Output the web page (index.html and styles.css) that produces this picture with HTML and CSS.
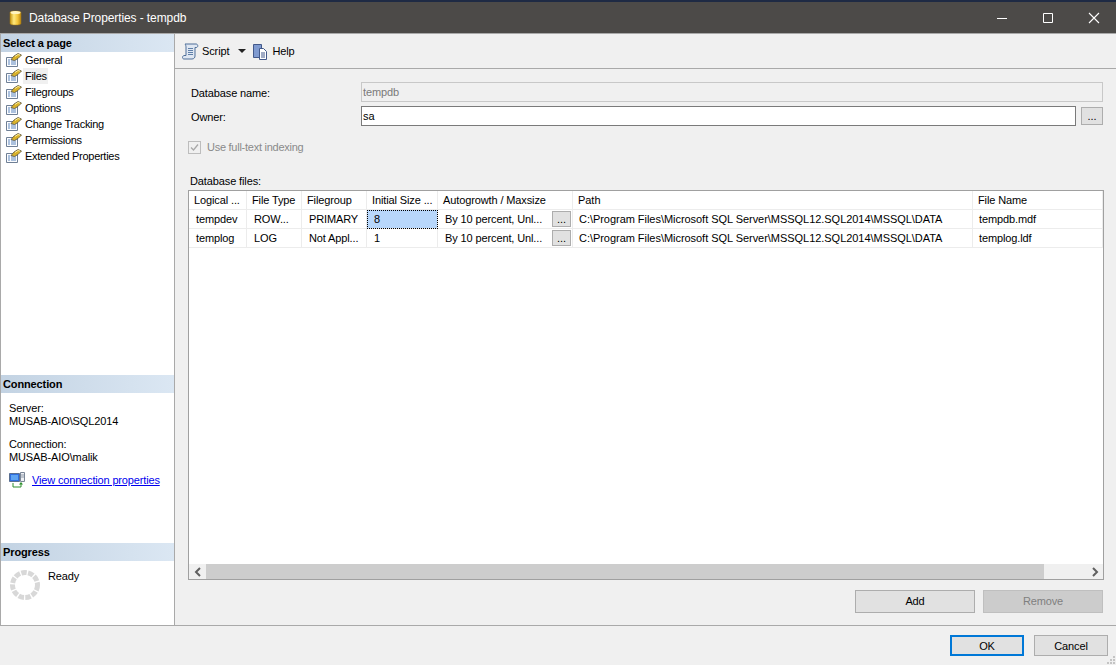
FILE: index.html
```html
<!DOCTYPE html>
<html lang="en">
<head>
<meta charset="utf-8">
<title>Database Properties - tempdb</title>
<link rel="stylesheet" href="styles.css">
</head>
<body>
<svg class="defs" width="0" height="0" aria-hidden="true">
  <defs>
    <linearGradient id="dbg" x1="0" x2="1" y1="0" y2="0">
      <stop offset="0" stop-color="#c4930f"/><stop offset=".35" stop-color="#ffe97e"/><stop offset=".7" stop-color="#f3c53a"/><stop offset="1" stop-color="#b98510"/>
    </linearGradient>
    <symbol id="page" viewBox="0 0 18 16">
      <path d="M1.500 5.500h11v9h-11z" fill="#fbfcfe" stroke="#6f7f95"/>
      <path d="M3 8h2M3 10h2M3 12h2M6 8h5M6 10h5M6 12h5" stroke="#5d86bd"/>
      <path d="M6 7.500L9 4l4-2.500 3.500 1.500L13 6.500 9.500 8.500z" fill="#d9b22a" stroke="#5c5640" stroke-width=".8"/>
      <path d="M10 4.500l3-2 2 .6" stroke="#fff2a6" fill="none" stroke-width=".9"/>
    </symbol>
  </defs>
</svg>
<div class="window">
  <header class="titlebar">
    <svg class="dbicon" width="13" height="16" viewBox="0 0 13 16"><path d="M1 2.500C1 .500 12 .500 12 2.500v11c0 2-11 2-11 0z" fill="url(#dbg)" stroke="#a87d12" stroke-width=".5"/><ellipse cx="6.500" cy="2.500" rx="5" ry="1.500" fill="#fff4c0"/></svg>
    <span class="title">Database Properties - tempdb</span>
    <div class="winbtns">
      <span class="winbtn"><svg width="12" height="12" viewBox="0 0 12 12"><path d="M1 6.500h10" stroke="#fff"/></svg></span>
      <span class="winbtn"><svg width="12" height="12" viewBox="0 0 12 12"><path d="M1.500 1.500h9v9h-9z" fill="none" stroke="#fff"/></svg></span>
      <span class="winbtn"><svg width="12" height="12" viewBox="0 0 12 12"><path d="M1 1l10 10M11 1L1 11" stroke="#fff" stroke-width="1.100"/></svg></span>
    </div>
  </header>
  <div class="main">
    <aside class="sidebar">
      <section class="side-top">
        <h2 class="side-head">Select a page</h2>
        <ul class="pages">
          <li class="page"><svg class="pico"><use href="#page"/></svg><span class="plabel">General</span></li>
          <li class="page"><svg class="pico"><use href="#page"/></svg><span class="plabel sel">Files</span></li>
          <li class="page"><svg class="pico"><use href="#page"/></svg><span class="plabel">Filegroups</span></li>
          <li class="page"><svg class="pico"><use href="#page"/></svg><span class="plabel">Options</span></li>
          <li class="page"><svg class="pico"><use href="#page"/></svg><span class="plabel">Change Tracking</span></li>
          <li class="page"><svg class="pico"><use href="#page"/></svg><span class="plabel">Permissions</span></li>
          <li class="page"><svg class="pico"><use href="#page"/></svg><span class="plabel">Extended Properties</span></li>
        </ul>
      </section>
      <section class="side-conn">
        <h2 class="side-head">Connection</h2>
        <div class="conn-body">
          <div class="conn-line">Server:</div>
          <div class="conn-line">MUSAB-AIO\SQL2014</div>
          <div class="conn-line gap">Connection:</div>
          <div class="conn-line">MUSAB-AIO\malik</div>
          <div class="conn-link">
            <svg width="16" height="16" viewBox="0 0 16 16"><path d="M.5 1.500h10v8H.5z" fill="#2f6fe0" stroke="#5a6f90"/><path d="M2 3h7v5H2z" fill="#5ea4f2"/><path d="M11.500.5h4v9h-4z" fill="#eef0f4" stroke="#7a8696"/><path d="M12 3h3M12 5h3" stroke="#8c97a6"/><path d="M4 11v4h8v-4" fill="none" stroke="#2e8f2e"/><path d="M12 10l-2 2.500h4z" fill="#2e8f2e"/></svg>
            <a class="link" href="#">View connection properties</a>
          </div>
        </div>
      </section>
      <section class="side-prog">
        <h2 class="side-head">Progress</h2>
        <div class="prog-body">
          <svg class="spinner" width="32" height="32" viewBox="0 0 32 32"><circle cx="16" cy="16" r="12.500" fill="none" stroke="#d8d8d8" stroke-width="5" stroke-dasharray="5.500 1.350"/></svg>
          <span class="ready">Ready</span>
        </div>
      </section>
    </aside>
    <main class="content">
      <div class="toolbar">
        <svg class="tb-ico" width="17" height="17" viewBox="0 0 17 17"><path d="M3 1h11c2 0 2.500 3 .5 3.500H13V13c0 1.500-1 3-3 3H2c-2 0-2-3 0-3.500h2V4C4 3 3.500 1.500 3 1z" fill="#dfe7f2" stroke="#4f6f99"/><path d="M6 5.500h5M6 7.500h5M6 9.500h5M6 11.500h5" stroke="#5f7fa8"/></svg>
        <span class="tb-label">Script</span>
        <span class="tb-arrow"></span>
        <svg class="tb-ico help" width="17" height="17" viewBox="0 0 17 17"><path d="M1.500 1.500h8v13h-8z" fill="#7f9ad0" stroke="#43598a"/><path d="M7.500 5.500h4l3 3v8h-7z" fill="#fff" stroke="#43598a"/><path d="M9 10h4M9 12h4M9 14h4" stroke="#43598a"/></svg>
        <span class="tb-label">Help</span>
      </div>
      <div class="form">
        <div class="row r-name">
          <label class="lbl">Database name:</label>
          <div class="input disabled">tempdb</div>
        </div>
        <div class="row r-owner">
          <label class="lbl">Owner:</label>
          <div class="input owner">sa</div>
          <button class="btn dots">...</button>
        </div>
        <div class="check">
          <span class="checkbox"><svg width="11" height="11" viewBox="0 0 11 11"><path d="M2 5.500l2.500 2.500L9 2.500" fill="none" stroke="#a8a8a8" stroke-width="1.300"/></svg></span>
          <span class="check-label">Use full-text indexing</span>
        </div>
        <div class="files-label">Database files:</div>
        <div class="grid">
          <div class="table">
            <div class="tr head">
              <div class="c c1">Logical ...</div><div class="c c2">File Type</div><div class="c c3">Filegroup</div><div class="c c4">Initial Size ...</div><div class="c c5">Autogrowth / Maxsize</div><div class="c c6">Path</div><div class="c c7">File Name</div>
            </div>
            <div class="tr">
              <div class="c c1">tempdev</div><div class="c c2">ROW...</div><div class="c c3">PRIMARY</div><div class="c c4 active">8</div><div class="c c5"><span class="ag">By 10 percent, Unl...</span><button class="btn cellbtn">...</button></div><div class="c c6">C:\Program Files\Microsoft SQL Server\MSSQL12.SQL2014\MSSQL\DATA</div><div class="c c7">tempdb.mdf</div>
            </div>
            <div class="tr">
              <div class="c c1">templog</div><div class="c c2">LOG</div><div class="c c3">Not Appl...</div><div class="c c4">1</div><div class="c c5"><span class="ag">By 10 percent, Unl...</span><button class="btn cellbtn">...</button></div><div class="c c6">C:\Program Files\Microsoft SQL Server\MSSQL12.SQL2014\MSSQL\DATA</div><div class="c c7">templog.ldf</div>
            </div>
          </div>
          <div class="hscroll">
            <span class="sbtn"><svg width="8" height="10" viewBox="0 0 8 10"><path d="M6 1L2 5l4 4" fill="none" stroke="#606060" stroke-width="2"/></svg></span>
            <div class="track"><div class="thumb"></div></div>
            <span class="sbtn"><svg width="8" height="10" viewBox="0 0 8 10"><path d="M2 1l4 4-4 4" fill="none" stroke="#606060" stroke-width="2"/></svg></span>
          </div>
        </div>
        <div class="grid-actions">
          <button class="btn act">Add</button>
          <button class="btn act off">Remove</button>
        </div>
      </div>
    </main>
  </div>
  <footer class="footer">
    <button class="btn foot ok">OK</button>
    <button class="btn foot">Cancel</button>
    <svg class="grip" width="10" height="10" viewBox="0 0 10 10"><path d="M7 1h2v2H7zM4 4h2v2H4zM7 4h2v2H7zM1 7h2v2H1zM4 7h2v2H4zM7 7h2v2H7z" fill="#c4c4c4"/></svg>
  </footer>
</div>
</body>
</html>
```
FILE: styles.css
```css
* { box-sizing: border-box; }
html, body { margin: 0; padding: 0; }
body { width: 1116px; height: 665px; overflow: hidden; background: #f0f0f0; font-family: "Liberation Sans", Arial, sans-serif; font-size: 11px; letter-spacing: -.12px; color: #000; }
.defs { display: block; height: 0; }
.window { width: 1116px; height: 665px; display: flex; flex-direction: column; border-top: 2px solid #1e2a44; position: relative; }
.titlebar { height: 31px; flex: none; background: #4c4a48; color: #fff; display: flex; align-items: center; padding-left: 9px; }
.dbicon { margin-right: 7px; }
.title { font-size: 12px; letter-spacing: -.1px; }
.winbtns { margin-left: auto; display: flex; margin-right: -1px; }
.winbtn { width: 46px; height: 31px; display: flex; align-items: center; justify-content: center; }
.main { flex: 1; display: flex; min-height: 0; border-top: 1px solid #a9a9a9; border-bottom: 1px solid #a9a9a9; }
.sidebar { width: 175px; flex: none; background: #fff; border-left: 1px solid #a9a9a9; border-right: 1px solid #a9a9a9; display: flex; flex-direction: column; }
.side-top { height: 341px; flex: none; }
.side-conn { height: 168px; flex: none; }
.side-prog { flex: 1; }
.side-head { margin: 0; height: 18px; padding: 2px 0 0 2px; font-size: 11px; line-height: 15px; font-weight: bold; color: #000; background: linear-gradient(90deg, #c3d3e3, #dbe7f3); }
.pages { list-style: none; margin: 0; padding: 0; }
.page { height: 16px; display: flex; align-items: center; padding-left: 4px; }
.pico { width: 18px; height: 16px; flex: none; }
.plabel { padding: 0 1px 0 2px; line-height: 16px; letter-spacing: -.28px; }
.sel { background: #f0f0f0; }
.conn-body { padding: 9px 8px 0; }
.conn-line { line-height: 12.500px; }
.conn-line.gap { margin-top: 11px; }
.conn-link { display: flex; align-items: center; margin-top: 9px; gap: 7px; white-space: nowrap; }
.link { color: #0000ee; line-height: 16px; letter-spacing: -.16px; }
.prog-body { display: flex; align-items: flex-start; padding-left: 8px; gap: 7px; }
.spinner { margin-top: 8px; }
.ready { line-height: 16px; margin-top: 7px; }
.content { flex: 1; min-width: 0; display: flex; flex-direction: column; background: #f0f0f0; }
.toolbar { height: 35px; flex: none; display: flex; align-items: center; border-bottom: 1px solid #a9a9a9; padding-left: 7px; }
.tb-ico { margin-right: 3px; }
.tb-label { line-height: 16px; }
.tb-arrow { margin: 0 6px 0 9px; width: 0; height: 0; border-left: 4px solid transparent; border-right: 4px solid transparent; border-top: 4px solid #222; }
.form { flex: 1; display: flex; flex-direction: column; padding: 13px 13px 0 13px; min-height: 0; }
.row { display: flex; align-items: center; }
.lbl { width: 173px; flex: none; padding: 1px 0 0 3px; }
.r-name { height: 20px; }
.r-owner { height: 20px; margin-top: 4px; }
.input { height: 20px; padding-left: 1px; line-height: 18px; }
.disabled { flex: 1; background: #f0f0f0; border: 1px solid #c8c8c8; color: #7a7a7a; }
.owner { width: 715px; background: #fff; border: 1px solid #7a7a7a; line-height: 19px; }
.btn { font-family: inherit; font-size: 11px; letter-spacing: -.12px; color: #000; background: #e1e1e1; border: 1px solid #adadad; padding: 0; }
.dots { width: 22px; height: 18px; margin-left: 5px; line-height: 10px; }
.check { display: flex; align-items: center; margin-top: 13px; height: 16px; color: #8a8a8a; }
.checkbox { width: 13px; height: 13px; border: 1px solid #bdbdbd; margin-right: 6px; display: flex; align-items: center; justify-content: center; }
.check-label { line-height: 16px; letter-spacing: -.26px; }
.files-label { margin-top: 19px; height: 14px; line-height: 14px; padding-left: 2px; }
.grid { margin-top: 2px; width: 916px; height: 390px; background: #fff; border: 1px solid #a0a0a0; display: flex; flex-direction: column; }
.table { flex: 1; overflow: hidden; }
.tr { display: flex; height: 19px; }
.c { height: 100%; border-right: 1px solid #ececec; border-bottom: 1px solid #ececec; padding-left: 7px; line-height: 18px; white-space: nowrap; flex: none; overflow: hidden; }
.head .c { padding-left: 5px; }
.c1 { width: 58px; }
.c2 { width: 55px; }
.c3 { width: 65px; }
.c4 { width: 71px; }
.c5 { width: 135px; display: flex; }
.c6 { width: 400px; padding-left: 6px; letter-spacing: -.04px; }
.c7 { width: 130px; padding-left: 6px; }
.active { background: #b8d7fb; outline: 1px dotted #000; outline-offset: -1px; }
.ag { flex: 1; }
.cellbtn { width: 19px; height: 16px; margin: 1px 1px 0 0; line-height: 10px; flex: none; }
.hscroll { height: 15px; flex: none; display: flex; background: #f0f0f0; }
.sbtn { width: 17px; flex: none; display: flex; align-items: center; justify-content: center; }
.track { flex: 1; min-width: 0; }
.thumb { width: 838px; height: 100%; background: #cdcdcd; }
.grid-actions { display: flex; justify-content: flex-end; gap: 8px; margin-top: 10px; }
.act { width: 120px; height: 23px; padding-bottom: 2px; }
.off { color: #7f7f7f; background: #cccccc; border-color: #bfbfbf; }
.footer { height: 39px; flex: none; display: flex; justify-content: flex-end; align-items: flex-start; gap: 10px; padding: 9px 8px 0 0; }
.foot { width: 74px; height: 21px; }
.ok { border: 2px solid #0078d7; }
.grip { position: absolute; right: 0; bottom: 0; }
```
